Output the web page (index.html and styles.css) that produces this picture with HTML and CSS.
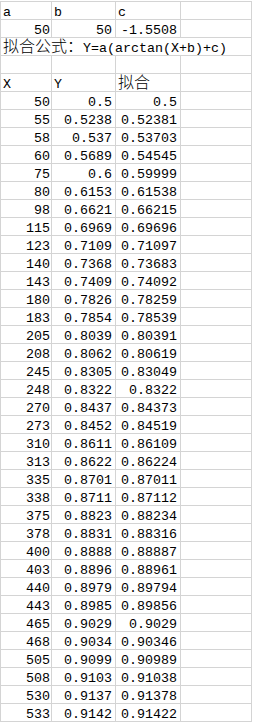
FILE: index.html
```html
<!DOCTYPE html>
<html lang="zh">
<head>
<meta charset="utf-8">
<title>拟合</title>
<link rel="stylesheet" href="styles.css">
</head>
<body>
<div class="sheet">
  <div class="c l">a</div><div class="c l">b</div><div class="c l">c</div><div class="c"></div>
  <div class="c r ra">50</div><div class="c r rb">50</div><div class="c r rc">-1.5508</div><div class="c"></div>
  <div class="c l span cjk"><span class="zh">拟合公式：</span>Y=a(arctan(X+b)+c)</div>
  <div class="c"></div><div class="c"></div><div class="c"></div><div class="c"></div>
  <div class="c l">X</div><div class="c l">Y</div><div class="c l cjk"><span class="zh">拟合</span></div><div class="c"></div>
  <div class="c r ra">50</div><div class="c r rb">0.5</div><div class="c r rc">0.5</div><div class="c"></div>
  <div class="c r ra">55</div><div class="c r rb">0.5238</div><div class="c r rc">0.52381</div><div class="c"></div>
  <div class="c r ra">58</div><div class="c r rb">0.537</div><div class="c r rc">0.53703</div><div class="c"></div>
  <div class="c r ra">60</div><div class="c r rb">0.5689</div><div class="c r rc">0.54545</div><div class="c"></div>
  <div class="c r ra">75</div><div class="c r rb">0.6</div><div class="c r rc">0.59999</div><div class="c"></div>
  <div class="c r ra">80</div><div class="c r rb">0.6153</div><div class="c r rc">0.61538</div><div class="c"></div>
  <div class="c r ra">98</div><div class="c r rb">0.6621</div><div class="c r rc">0.66215</div><div class="c"></div>
  <div class="c r ra">115</div><div class="c r rb">0.6969</div><div class="c r rc">0.69696</div><div class="c"></div>
  <div class="c r ra">123</div><div class="c r rb">0.7109</div><div class="c r rc">0.71097</div><div class="c"></div>
  <div class="c r ra">140</div><div class="c r rb">0.7368</div><div class="c r rc">0.73683</div><div class="c"></div>
  <div class="c r ra">143</div><div class="c r rb">0.7409</div><div class="c r rc">0.74092</div><div class="c"></div>
  <div class="c r ra">180</div><div class="c r rb">0.7826</div><div class="c r rc">0.78259</div><div class="c"></div>
  <div class="c r ra">183</div><div class="c r rb">0.7854</div><div class="c r rc">0.78539</div><div class="c"></div>
  <div class="c r ra">205</div><div class="c r rb">0.8039</div><div class="c r rc">0.80391</div><div class="c"></div>
  <div class="c r ra">208</div><div class="c r rb">0.8062</div><div class="c r rc">0.80619</div><div class="c"></div>
  <div class="c r ra">245</div><div class="c r rb">0.8305</div><div class="c r rc">0.83049</div><div class="c"></div>
  <div class="c r ra">248</div><div class="c r rb">0.8322</div><div class="c r rc">0.8322</div><div class="c"></div>
  <div class="c r ra">270</div><div class="c r rb">0.8437</div><div class="c r rc">0.84373</div><div class="c"></div>
  <div class="c r ra">273</div><div class="c r rb">0.8452</div><div class="c r rc">0.84519</div><div class="c"></div>
  <div class="c r ra">310</div><div class="c r rb">0.8611</div><div class="c r rc">0.86109</div><div class="c"></div>
  <div class="c r ra">313</div><div class="c r rb">0.8622</div><div class="c r rc">0.86224</div><div class="c"></div>
  <div class="c r ra">335</div><div class="c r rb">0.8701</div><div class="c r rc">0.87011</div><div class="c"></div>
  <div class="c r ra">338</div><div class="c r rb">0.8711</div><div class="c r rc">0.87112</div><div class="c"></div>
  <div class="c r ra">375</div><div class="c r rb">0.8823</div><div class="c r rc">0.88234</div><div class="c"></div>
  <div class="c r ra">378</div><div class="c r rb">0.8831</div><div class="c r rc">0.88316</div><div class="c"></div>
  <div class="c r ra">400</div><div class="c r rb">0.8888</div><div class="c r rc">0.88887</div><div class="c"></div>
  <div class="c r ra">403</div><div class="c r rb">0.8896</div><div class="c r rc">0.88961</div><div class="c"></div>
  <div class="c r ra">440</div><div class="c r rb">0.8979</div><div class="c r rc">0.89794</div><div class="c"></div>
  <div class="c r ra">443</div><div class="c r rb">0.8985</div><div class="c r rc">0.89856</div><div class="c"></div>
  <div class="c r ra">465</div><div class="c r rb">0.9029</div><div class="c r rc">0.9029</div><div class="c"></div>
  <div class="c r ra">468</div><div class="c r rb">0.9034</div><div class="c r rc">0.90346</div><div class="c"></div>
  <div class="c r ra">505</div><div class="c r rb">0.9099</div><div class="c r rc">0.90989</div><div class="c"></div>
  <div class="c r ra">508</div><div class="c r rb">0.9103</div><div class="c r rc">0.91038</div><div class="c"></div>
  <div class="c r ra">530</div><div class="c r rb">0.9137</div><div class="c r rc">0.91378</div><div class="c"></div>
  <div class="c r ra">533</div><div class="c r rb">0.9142</div><div class="c r rc">0.91422</div><div class="c"></div>
</div>
</body>
</html>
```
FILE: styles.css
```css
html, body {
  margin: 0;
  padding: 0;
  background: #ffffff;
}
body {
  font-family: "Liberation Mono", "DejaVu Sans Mono", monospace;
  font-size: 13.33px;
  color: #000000;
}
.sheet {
  display: grid;
  grid-template-columns: 51px 64px 65px 71px;
  grid-auto-rows: 18px;
  margin-top: 1px;
  width: max-content;
  border-left: 1px solid #d4d4d4;
  border-top: 1px solid #d4d4d4;
}
.c {
  box-sizing: border-box;
  height: 18px;
  border-right: 1px solid #d4d4d4;
  border-bottom: 1px solid #d4d4d4;
  padding-top: 5px;
  line-height: 12px;
  white-space: nowrap;
  overflow: visible;
}
.cjk {
  padding-top: 0;
  line-height: 15px;
}
.l {
  text-align: left;
  padding-left: 2px;
}
.r {
  text-align: right;
}
.ra { padding-right: 1px; }
.rb { padding-right: 3px; }
.rc { padding-right: 3px; }
.span {
  grid-column: 1 / 5;
}
.zh {
  font-family: "Noto Sans CJK SC", "Noto Sans CJK JP", sans-serif;
  font-size: 16px;
  font-weight: 300;
}
```
